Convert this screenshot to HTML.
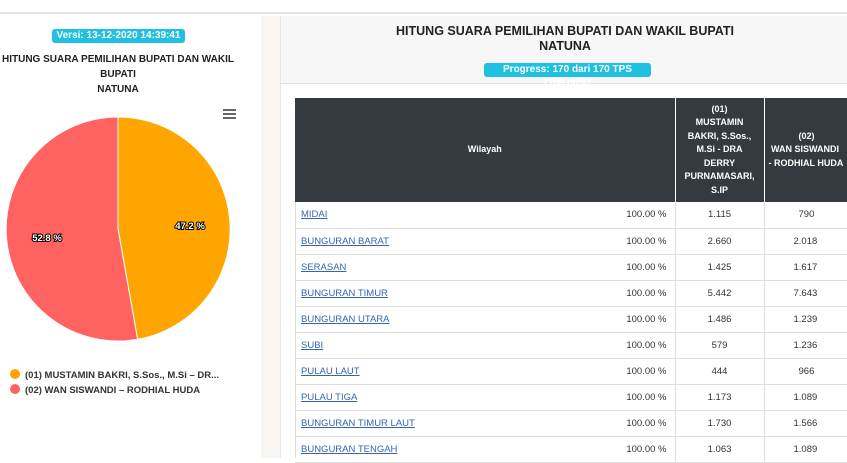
<!DOCTYPE html>
<html><head><meta charset="utf-8"><style>
*{margin:0;padding:0;box-sizing:border-box}
body{width:847px;height:458px;overflow:hidden;background:#fff;font-family:"Liberation Sans",sans-serif;position:relative}
.top{position:absolute;left:0;top:0;width:847px;height:14px;background:#fff;border-bottom:2px solid #e4e4e4}
.gap{position:absolute;left:261px;top:16px;width:19px;height:442px;background:#f7f4f1}
.lc{position:absolute;left:0;top:16px;width:261px;height:442px;background:#fff}
.rc{position:absolute;left:280px;top:16px;width:567px;height:442px;background:#fff;border-left:1px solid #e6e6e6}
.rh{position:absolute;left:0;top:0;width:567px;height:68px;background:#f7f7f7;border-bottom:1px solid #e2e2e2}
.badge{position:absolute;background:#1fc0e0;color:#fff;font-size:10px;font-weight:bold;border-radius:3px;text-align:center;line-height:14px;height:14px}
.t1{position:absolute;text-align:center;font-weight:bold;color:#222}
table{position:absolute;left:295px;top:98px;width:552px;table-layout:fixed;border-collapse:collapse;font-size:9.5px}
th{background:#343a40;color:#fff;font-weight:bold;text-align:center;border-right:1px solid #fff;line-height:13.5px;font-size:9px}
td{height:26px;border-bottom:1px solid #dedede;border-right:1px solid #dedede;color:#333;text-align:center;white-space:nowrap}
td a{color:#3565b0;text-decoration:underline}
.lg{position:absolute;left:10px;font-size:9.5px;font-weight:bold;color:#333;white-space:nowrap}
.lg i{display:inline-block;width:10px;height:10px;border-radius:50%;vertical-align:-1px;margin-right:5px}
.w{text-align:left;padding-left:6px;border-right:none}
.p{text-align:right;padding-right:8px}
</style></head><body>
<div class="top"></div>
<div class="gap"></div>
<div class="lc"></div>
<div class="rc"><div class="rh"></div></div>
<div class="badge" style="left:52px;top:29px;width:133px">Versi: 13-12-2020 14:39:41</div>
<div class="t1" style="left:-12px;top:52px;width:260px;font-size:10px;line-height:15px">HITUNG SUARA PEMILIHAN BUPATI DAN WAKIL<br>BUPATI<br>NATUNA</div>
<div style="position:absolute;left:223px;top:109px;width:13px;height:2px;background:#666;box-shadow:0 4px 0 #666,0 8px 0 #666"></div>
<svg style="position:absolute;left:0;top:0" width="260" height="458">
<path d="M118,117 A112,112 0 0 1 137.6,339.3 L118,229 Z" fill="#ffa500" stroke="#fff" stroke-width="1"/>
<path d="M137.6,339.3 A112,112 0 1 1 118,117 L118,229 Z" fill="#ff6361" stroke="#fff" stroke-width="1"/>
<text x="190" y="229" fill="#fff" stroke="#000" stroke-width="2" paint-order="stroke" font-size="9.5" font-weight="bold" text-anchor="middle" font-family="Liberation Sans">47.2 %</text>
<text x="47" y="241" fill="#fff" stroke="#000" stroke-width="2" paint-order="stroke" font-size="9.5" font-weight="bold" text-anchor="middle" font-family="Liberation Sans">52.8 %</text>
</svg>
<div class="lg" style="top:369px"><i style="background:#ffa500"></i>(01) MUSTAMIN BAKRI, S.Sos., M.Si – DR...</div>
<div class="lg" style="top:384px"><i style="background:#ff6361"></i>(02) WAN SISWANDI – RODHIAL HUDA</div>
<div class="t1" style="left:395px;top:24px;width:340px;font-size:12.5px;line-height:15px">HITUNG SUARA PEMILIHAN BUPATI DAN WAKIL BUPATI<br>NATUNA</div>
<div class="badge" style="left:484px;top:63px;width:167px">Progress: 170 dari 170 TPS (100.00%)</div>
<table>
<colgroup><col style="width:282px"><col style="width:98px"><col style="width:89px"><col style="width:83px"></colgroup>
<tr style="height:104px"><th colspan="2">Wilayah</th><th>(01)<br>MUSTAMIN<br>BAKRI, S.Sos.,<br>M.Si - DRA<br>DERRY<br>PURNAMASARI,<br>S.IP</th><th style="border-right:none;text-align:left;padding-left:4px">&nbsp;&nbsp;&nbsp;&nbsp;&nbsp;&nbsp;&nbsp;&nbsp;&nbsp;&nbsp;&nbsp;&nbsp;(02)<br>&nbsp;WAN SISWANDI<br>- RODHIAL HUDA</th></tr>
<tr><td class="w"><a>MIDAI</a></td><td class="p">100.00 %</td><td>1.115</td><td style="text-align:left;padding-left:34px">790</td></tr>
<tr><td class="w"><a>BUNGURAN BARAT</a></td><td class="p">100.00 %</td><td>2.660</td><td style="text-align:left;padding-left:29px">2.018</td></tr>
<tr><td class="w"><a>SERASAN</a></td><td class="p">100.00 %</td><td>1.425</td><td style="text-align:left;padding-left:29px">1.617</td></tr>
<tr><td class="w"><a>BUNGURAN TIMUR</a></td><td class="p">100.00 %</td><td>5.442</td><td style="text-align:left;padding-left:29px">7.643</td></tr>
<tr><td class="w"><a>BUNGURAN UTARA</a></td><td class="p">100.00 %</td><td>1.486</td><td style="text-align:left;padding-left:29px">1.239</td></tr>
<tr><td class="w"><a>SUBI</a></td><td class="p">100.00 %</td><td>579</td><td style="text-align:left;padding-left:29px">1.236</td></tr>
<tr><td class="w"><a>PULAU LAUT</a></td><td class="p">100.00 %</td><td>444</td><td style="text-align:left;padding-left:34px">966</td></tr>
<tr><td class="w"><a>PULAU TIGA</a></td><td class="p">100.00 %</td><td>1.173</td><td style="text-align:left;padding-left:29px">1.089</td></tr>
<tr><td class="w"><a>BUNGURAN TIMUR LAUT</a></td><td class="p">100.00 %</td><td>1.730</td><td style="text-align:left;padding-left:29px">1.566</td></tr>
<tr><td class="w"><a>BUNGURAN TENGAH</a></td><td class="p">100.00 %</td><td>1.063</td><td style="text-align:left;padding-left:29px">1.089</td></tr>
</table>
<div style="position:absolute;left:295px;top:202px;width:1px;height:256px;background:#dedede"></div>
</body></html>
